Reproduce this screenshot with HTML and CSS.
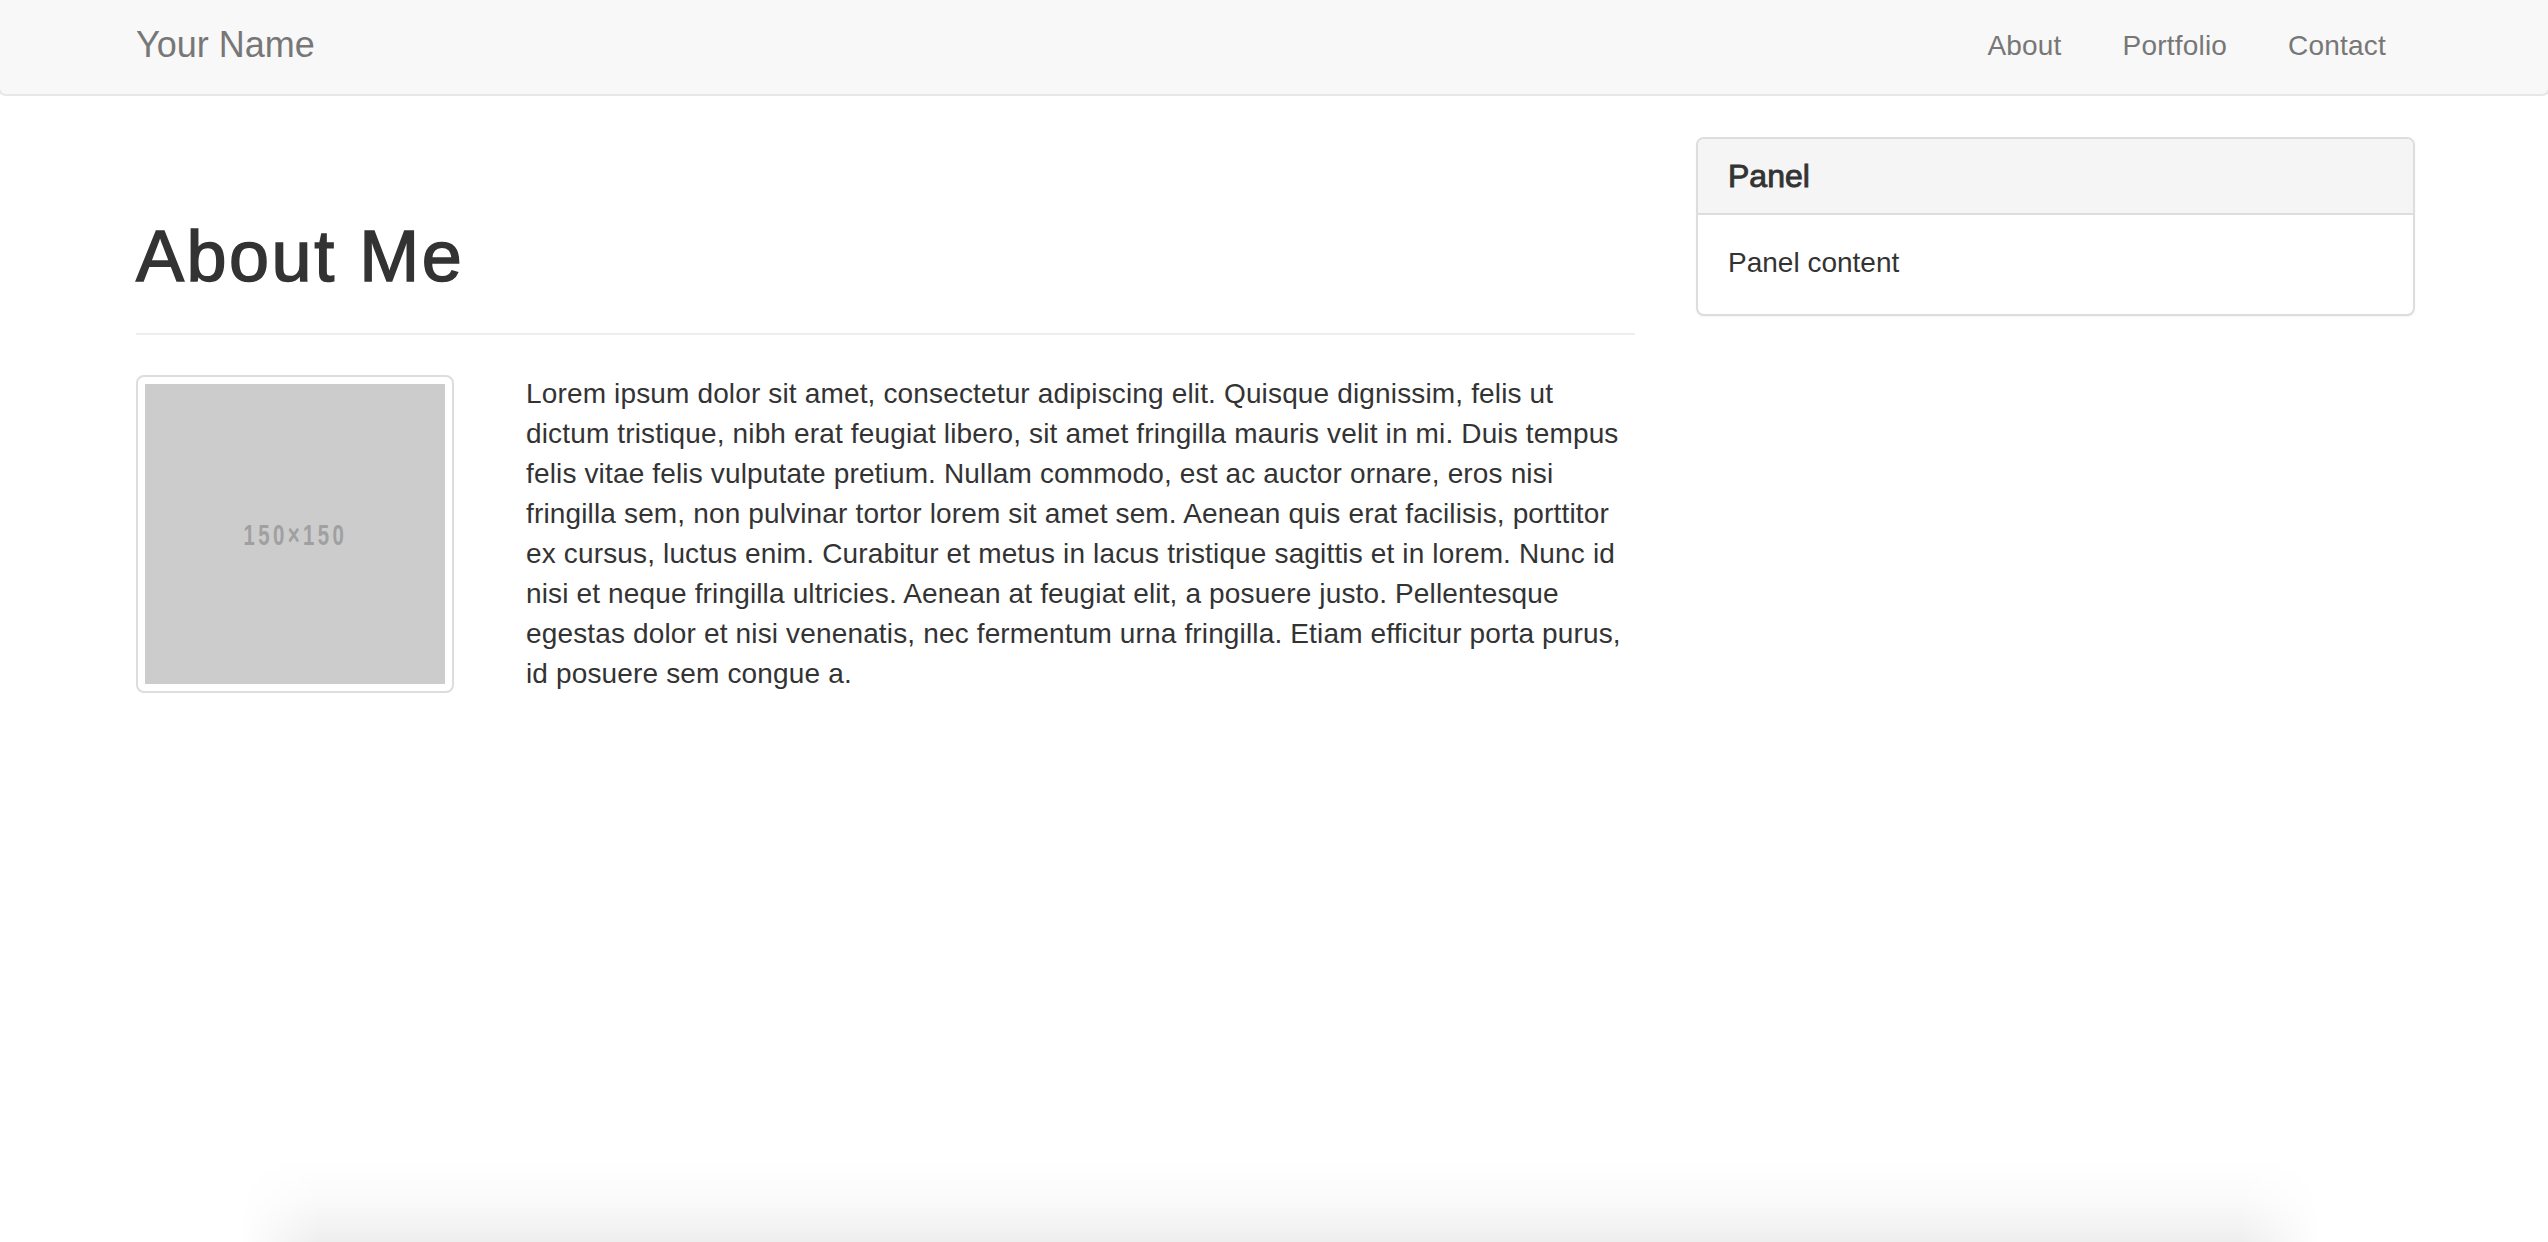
FILE: index.html
```html
<!DOCTYPE html>
<html lang="en">
<head>
<meta charset="utf-8">
<title>About Me</title>
<link rel="stylesheet" href="styles.css">
</head>
<body>
<nav class="navbar">
  <div class="container nav-inner">
    <a class="brand" href="#">Your Name</a>
    <ul class="nav-links">
      <li><a href="#">About</a></li>
      <li><a href="#">Portfolio</a></li>
      <li><a href="#">Contact</a></li>
    </ul>
  </div>
</nav>

<main class="container main-row">
  <section class="main-col">
    <div class="page-header">
      <h1>About Me</h1>
    </div>
    <div class="media-row">
      <div class="thumbnail">
        <div class="placeholder"><span>150×150</span></div>
      </div>
      <p class="bio">Lorem ipsum dolor sit amet, consectetur adipiscing elit. Quisque dignissim, felis ut<br>
dictum tristique, nibh erat feugiat libero, sit amet fringilla mauris velit in mi. Duis tempus<br>
felis vitae felis vulputate pretium. Nullam commodo, est ac auctor ornare, eros nisi<br>
fringilla sem, non pulvinar tortor lorem sit amet sem. Aenean quis erat facilisis, porttitor<br>
ex cursus, luctus enim. Curabitur et metus in lacus tristique sagittis et in lorem. Nunc id<br>
nisi et neque fringilla ultricies. Aenean at feugiat elit, a posuere justo. Pellentesque<br>
egestas dolor et nisi venenatis, nec fermentum urna fringilla. Etiam efficitur porta purus,<br>
id posuere sem congue a.</p>
    </div>
  </section>
  <aside class="side-col">
    <div class="panel">
      <div class="panel-heading">Panel</div>
      <div class="panel-body">Panel content</div>
    </div>
  </aside>
</main>

<div class="footer-shade"></div>
</body>
</html>
```

FILE: styles.css
```css
html, body {
  margin: 0;
  padding: 0;
  background: #fff;
}

body {
  font-family: "Liberation Sans", Arial, Helvetica, sans-serif;
  font-size: 28px;
  line-height: 40px;
  color: #333;
}

a {
  text-decoration: none;
}

.container {
  width: 2279px;
  margin: 0 133px 0 136px;
}

/* Navbar */
.navbar {
  height: 94px;
  background: #f8f8f8;
  border-bottom: 2px solid #e7e7e7;
  border-left: 2px solid #e7e7e7;
  border-right: 2px solid #e7e7e7;
  border-radius: 0 0 8px 8px;
  box-sizing: content-box;
  margin: 0 -2px;
}

.nav-inner {
  display: flex;
  justify-content: space-between;
  align-items: flex-start;
  height: 94px;
}

.brand {
  display: block;
  padding-top: 25px;
  font-size: 36px;
  line-height: 40px;
  color: #777;
}

.nav-links {
  display: flex;
  list-style: none;
  margin: 0 -1px 0 0;
  padding: 0;
}

.nav-links a {
  display: block;
  padding: 26px 30px 0 31px;
  font-size: 28px;
  line-height: 40px;
  letter-spacing: 0.2px;
  color: #777;
}

/* Main */
.main-row {
  display: grid;
  grid-template-columns: 1499px 1fr;
  column-gap: 61px;
}

.page-header {
  margin-top: 121px;
  padding-bottom: 37px;
  border-bottom: 2px solid #eee;
  margin-bottom: 39px;
}

.page-header h1 {
  margin: 0;
  font-size: 72px;
  line-height: 79px;
  font-weight: normal;
  letter-spacing: 2.5px;
  -webkit-text-stroke: 1.5px #333;
  color: #333;
}

.media-row {
  display: grid;
  grid-template-columns: 330px 1fr;
  column-gap: 60px;
  align-items: start;
}

.thumbnail {
  margin-top: 1px;
  width: 318px;
  height: 318px;
  box-sizing: border-box;
  padding: 7px;
  border: 2px solid #ddd;
  border-radius: 8px;
  background: #fff;
}

.placeholder {
  width: 300px;
  height: 300px;
  background: #ccc;
  display: flex;
  align-items: center;
  justify-content: center;
}

.placeholder span {
  display: inline-block;
  font-size: 30px;
  line-height: 30px;
  font-weight: bold;
  letter-spacing: 5px;
  color: #a0a0a0;
  transform: scaleX(0.68);
  margin-top: 2px;
}

.bio {
  margin: 0;
  letter-spacing: 0.15px;
  color: #333;
}

/* Panel */
.panel {
  margin-top: 41px;
  border: 2px solid #ddd;
  border-radius: 8px;
  overflow: hidden;
  background: #fff;
  box-shadow: 0 1px 2px rgba(0, 0, 0, 0.05);
}

.panel-heading {
  background: #f5f5f5;
  border-bottom: 2px solid #ddd;
  padding: 20px 30px 19px;
  font-size: 32px;
  line-height: 35px;
  -webkit-text-stroke: 0.9px #333;
  color: #333;
}

.panel-body {
  padding: 28px 30px 31px;
  font-size: 28px;
  line-height: 40px;
}

.footer-shade {
  position: fixed;
  left: 240px;
  width: 2080px;
  top: 1160px;
  height: 82px;
  background: linear-gradient(to bottom, rgba(0, 0, 0, 0), rgba(0, 0, 0, 0.02) 50%, rgba(0, 0, 0, 0.065));
  -webkit-mask-image: linear-gradient(to right, transparent, #000 80px, #000 calc(100% - 80px), transparent);
  mask-image: linear-gradient(to right, transparent, #000 80px, #000 calc(100% - 80px), transparent);
  pointer-events: none;
}
```
